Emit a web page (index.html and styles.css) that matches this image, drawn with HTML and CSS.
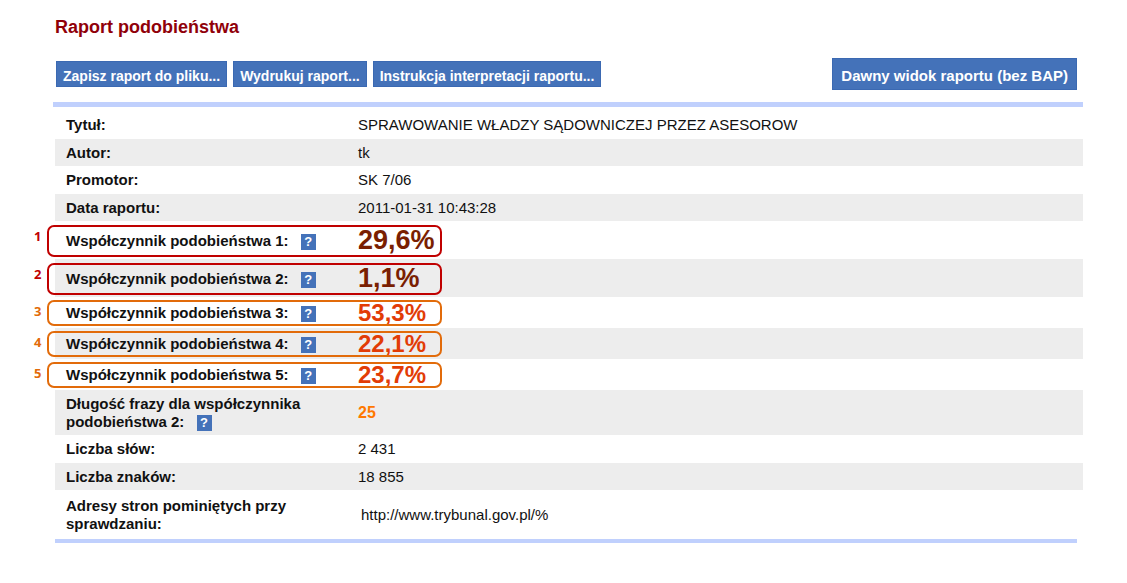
FILE: index.html
```html
<!DOCTYPE html>
<html lang="pl">
<head>
<meta charset="utf-8">
<title>Raport podobieństwa</title>
<link rel="stylesheet" href="styles.css">
</head>
<body>
<main class="report">
  <h1 class="title">Raport podobieństwa</h1>
  <div class="toolbar">
    <button class="btn" type="button">Zapisz raport do pliku...</button>
    <button class="btn" type="button">Wydrukuj raport...</button>
    <button class="btn" type="button">Instrukcja interpretacji raportu...</button>
    <button class="btn btn-large" type="button">Dawny widok raportu (bez BAP)</button>
  </div>
  <div class="rule rule-top"></div>
  <table class="data">
    <tbody>
      <tr class="row first"><th scope="row">Tytuł:</th><td>SPRAWOWANIE WŁADZY SĄDOWNICZEJ PRZEZ ASESOROW</td></tr>
      <tr class="row"><th scope="row">Autor:</th><td>tk</td></tr>
      <tr class="row"><th scope="row">Promotor:</th><td>SK 7/06</td></tr>
      <tr class="row"><th scope="row">Data raportu:</th><td>2011-01-31 10:43:28</td></tr>
      <tr class="row major"><th scope="row">Współczynnik podobieństwa 1: <button class="help" type="button">?</button><span class="frame"><span class="num">1</span></span></th><td>29,6%</td></tr>
      <tr class="row major"><th scope="row">Współczynnik podobieństwa 2: <button class="help" type="button">?</button><span class="frame"><span class="num">2</span></span></th><td>1,1%</td></tr>
      <tr class="row minor"><th scope="row">Współczynnik podobieństwa 3: <button class="help" type="button">?</button><span class="frame"><span class="num">3</span></span></th><td>53,3%</td></tr>
      <tr class="row minor"><th scope="row">Współczynnik podobieństwa 4: <button class="help" type="button">?</button><span class="frame"><span class="num">4</span></span></th><td>22,1%</td></tr>
      <tr class="row minor"><th scope="row">Współczynnik podobieństwa 5: <button class="help" type="button">?</button><span class="frame"><span class="num">5</span></span></th><td>23,7%</td></tr>
      <tr class="row phrase"><th scope="row">Długość frazy dla współczynnika<br>podobieństwa 2: <button class="help" type="button">?</button></th><td>25</td></tr>
      <tr class="row"><th scope="row">Liczba słów:</th><td>2 431</td></tr>
      <tr class="row"><th scope="row">Liczba znaków:</th><td>18 855</td></tr>
      <tr class="row address"><th scope="row">Adresy stron pominiętych przy<br>sprawdzaniu:</th><td>http://www.trybunal.gov.pl/%</td></tr>
    </tbody>
  </table>
  <div class="rule rule-bottom"></div>
</main>
</body>
</html>
```
FILE: styles.css
```css
* { box-sizing: border-box; }
body {
  margin: 0;
  background: #fff;
  color: #111;
  font: 15px/18px "Liberation Sans", Arial, sans-serif;
}
.report { padding: 16px 44px 40px 55px; }
.title {
  margin: 0;
  color: #900009;
  font-size: 18px;
  line-height: 22px;
}
.toolbar {
  display: flex;
  align-items: center;
  gap: 6px;
  margin-top: 20px;
  padding: 0 6px 0 1px;
}
.btn {
  height: 26px;
  padding: 3px 6px 0;
  border: 1px solid #3b69b2;
  background: #4472b9;
  color: #fff;
  font: bold 14px/18px "Liberation Sans", Arial, sans-serif;
  white-space: nowrap;
}
.btn-large {
  height: 32px;
  margin-left: auto;
  padding: 3px 8px 0;
  font-size: 15px;
}
.rule { background: #c0d0fd; }
.rule-top { height: 5px; margin: 12px 0 0 -2px; }
.rule-bottom { height: 4px; margin-right: 6px; }
.data {
  width: 100%;
  table-layout: fixed;
  border-collapse: collapse;
}
.row { height: 28px; }
.row:nth-child(even) { height: 27px; background: #ededed; }
.data .first { height: 32px; }
.data th {
  position: relative;
  width: 303px;
  padding: 0 0 0 11px;
  text-align: left;
  white-space: nowrap;
}
.data td { padding: 0; }
.data .first th, .data .first td { padding-top: 4px; }
.data .major { height: 38px; }
.data .major th { padding-top: 2px; }
.major td {
  color: #7a1f02;
  font-size: 27px;
  font-weight: bold;
  line-height: 32px;
}
.data .minor { height: 31px; }
.data .minor th { padding-top: 1px; }
.minor td {
  color: #e23c06;
  font-size: 24px;
  font-weight: bold;
  line-height: 28px;
}
.data .phrase { height: 45px; }
.phrase td { color: #ff7800; font-size: 16px; font-weight: bold; }
.data .address { height: 49px; }
.data .address td { padding-left: 3px; }
.help {
  width: 15px;
  height: 16px;
  margin-left: 8px;
  padding: 0;
  border: 0;
  background: #4472b9;
  color: #fff;
  font: bold 13px/16px "Liberation Sans", Arial, sans-serif;
  vertical-align: baseline;
}
.frame {
  position: absolute;
  top: 4px;
  bottom: 2px;
  left: -8px;
  width: 395px;
  border: 2px solid #c00000;
  border-radius: 7px;
  color: #c00000;
  pointer-events: none;
}
.minor .frame { border-color: #e26b0a; color: #e26b0a; top: 3px; }
.num {
  position: absolute;
  top: 0;
  left: -15px;
  font: bold 13px/18px "Open Sans", sans-serif;
}
```
